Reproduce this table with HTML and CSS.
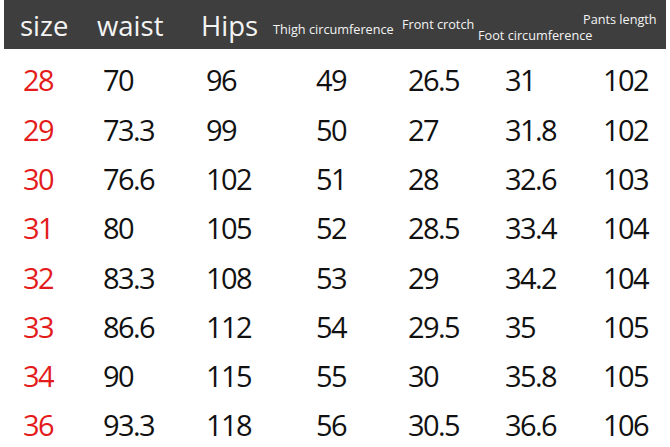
FILE: index.html
```html
<!DOCTYPE html>
<html>
<head>
<meta charset="utf-8">
<link rel="stylesheet" href="styles.css">
</head>
<body>
<div class="chart">
  <div class="head">
    <div class="h big">size</div>
    <div class="h big">waist</div>
    <div class="h big">Hips</div>
    <div class="h small thigh">Thigh circumference</div>
    <div class="h small front">Front crotch</div>
    <div class="h small foot">Foot circumference</div>
    <div class="h small pants">Pants length</div>
  </div>
  <div class="rows">
    <div class="row"><span class="sz">28</span><span>70</span><span>96</span><span>49</span><span>26.5</span><span>31</span><span>102</span></div>
    <div class="row"><span class="sz">29</span><span>73.3</span><span>99</span><span>50</span><span>27</span><span>31.8</span><span>102</span></div>
    <div class="row"><span class="sz">30</span><span>76.6</span><span>102</span><span>51</span><span>28</span><span>32.6</span><span>103</span></div>
    <div class="row"><span class="sz">31</span><span>80</span><span>105</span><span>52</span><span>28.5</span><span>33.4</span><span>104</span></div>
    <div class="row"><span class="sz">32</span><span>83.3</span><span>108</span><span>53</span><span>29</span><span>34.2</span><span>104</span></div>
    <div class="row"><span class="sz">33</span><span>86.6</span><span>112</span><span>54</span><span>29.5</span><span>35</span><span>105</span></div>
    <div class="row"><span class="sz">34</span><span>90</span><span>115</span><span>55</span><span>30</span><span>35.8</span><span>105</span></div>
    <div class="row"><span class="sz">36</span><span>93.3</span><span>118</span><span>56</span><span>30.5</span><span>36.6</span><span>106</span></div>
  </div>
</div>
</body>
</html>
```
FILE: styles.css
```css
html, body {
  margin: 0;
  padding: 0;
  background: #ffffff;
}

.chart {
  width: 670px;
  height: 447px;
  overflow: hidden;
  font-family: "Open Sans", "Noto Sans", sans-serif;
}

.head {
  margin: 0 4px;
  height: 49px;
  background: #3e3e3e;
  color: #f4f4f4;
  display: grid;
  grid-template-columns: 77px 104px 72px 129px 76px 105px auto;
  padding-left: 16px;
  box-sizing: border-box;
  align-items: start;
}

.h {
  white-space: nowrap;
}

.big {
  font-size: 27.5px;
  line-height: 30px;
  padding-top: 11px;
}

.small {
  font-size: 12.7px;
  line-height: 14px;
}

.thigh { padding-top: 22px; }
.front { padding-top: 17px; }
.foot { padding-top: 28px; }
.pants { padding-top: 12px; }

.rows {
  padding-top: 6.4px;
  padding-left: 23px;
}

.row {
  display: grid;
  grid-template-columns: 80px 103px 110px 92px 97px 98px auto;
  height: 49.3px;
  line-height: 49.3px;
  font-size: 29px;
  letter-spacing: -1.6px;
  color: #111111;
}

.sz {
  color: #e31b1b;
}
```
